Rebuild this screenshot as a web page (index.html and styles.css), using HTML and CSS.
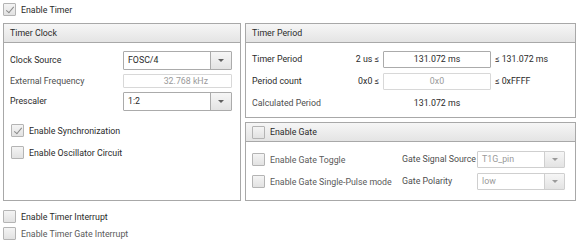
FILE: index.html
```html
<!DOCTYPE html>
<html lang="en">
<head>
  <meta charset="UTF-8">
  <title>Timer</title>
  <link rel="stylesheet" href="styles.css">
</head>
<body>
  <div class="timer-page">
    <!-- 상단 체크박스 -->
    <label class="check top-check">
      <span class="box checked"></span>
      <span class="check-text">Enable Timer</span>
    </label>

    <div class="panels">
      <!-- Timer Clock -->
      <div class="panel clock-panel">
        <div class="panel-head">Timer Clock</div>
        <div class="panel-body">
          <div class="field-row">
            <span class="label">Clock Source</span>
            <div class="combo">
              <span class="combo-value">FOSC/4</span>
              <span class="combo-button"><span class="arrow"></span></span>
            </div>
          </div>
          <div class="field-row">
            <span class="label muted">External Frequency</span>
            <div class="textbox readonly short">32.768 kHz</div>
          </div>
          <div class="field-row">
            <span class="label">Prescaler</span>
            <div class="combo">
              <span class="combo-value">1:2</span>
              <span class="combo-button"><span class="arrow"></span></span>
            </div>
          </div>
          <div class="clock-checks">
            <label class="check">
              <span class="box checked"></span>
              <span class="check-text">Enable Synchronization</span>
            </label>
            <label class="check">
              <span class="box"></span>
              <span class="check-text">Enable Oscillator Circuit</span>
            </label>
          </div>
        </div>
      </div>

      <div class="right-column">
        <!-- Timer Period -->
        <div class="panel period-panel">
          <div class="panel-head">Timer Period</div>
          <div class="panel-body period-grid">
            <span class="label">Timer Period</span>
            <span class="bound">2 us ≤</span>
            <div class="textbox">131.072 ms</div>
            <span class="bound-after">≤ 131.072 ms</span>

            <span class="label">Period count</span>
            <span class="bound">0x0 ≤</span>
            <div class="textbox readonly">0x0</div>
            <span class="bound-after">≤ 0xFFFF</span>

            <span class="label muted">Calculated Period</span>
            <span></span>
            <span class="calc-value">131.072 ms</span>
            <span></span>
          </div>
        </div>

        <!-- Enable Gate -->
        <div class="panel gate-panel">
          <div class="panel-head">
            <label class="check">
              <span class="box"></span>
              <span class="check-text">Enable Gate</span>
            </label>
          </div>
          <div class="panel-body gate-grid">
            <label class="check disabled">
              <span class="box"></span>
              <span class="check-text">Enable Gate Toggle</span>
            </label>
            <span class="label muted">Gate Signal Source</span>
            <div class="combo disabled">
              <span class="combo-value">T1G_pin</span>
              <span class="combo-button"><span class="arrow"></span></span>
            </div>

            <label class="check disabled">
              <span class="box"></span>
              <span class="check-text">Enable Gate Single-Pulse mode</span>
            </label>
            <span class="label muted">Gate Polarity</span>
            <div class="combo disabled">
              <span class="combo-value">low</span>
              <span class="combo-button"><span class="arrow"></span></span>
            </div>
          </div>
        </div>
      </div>
    </div>

    <!-- 하단 체크박스 -->
    <div class="bottom-checks">
      <label class="check">
        <span class="box"></span>
        <span class="check-text">Enable Timer Interrupt</span>
      </label>
      <label class="check disabled">
        <span class="box"></span>
        <span class="check-text">Enable Timer Gate Interrupt</span>
      </label>
    </div>
  </div>
</body>
</html>
```

FILE: styles.css
```css
/* 기본 */
* {
  box-sizing: border-box;
}
body {
  margin: 0;
  padding: 0;
  background-color: #FFFFFF;
  font-family: Roboto, "Open Sans", sans-serif;
  font-size: 8.8px;
  line-height: 13px;
  color: #2a2a2a;
}
.timer-page {
  padding: 3px 4px 0 3px;
}

/* 체크박스 */
.check {
  display: flex;
  align-items: center;
  height: 13px;
}
.box {
  position: relative;
  width: 13px;
  height: 13px;
  border: 1px solid #b4b4b4;
  border-radius: 1px;
  background: linear-gradient(#f4f4f4, #e2e2e2);
  flex-shrink: 0;
}
.box.checked::after {
  content: "";
  position: absolute;
  left: 4px;
  top: 1px;
  width: 3px;
  height: 7px;
  border-right: 1.3px solid #8a8a8a;
  border-bottom: 1.3px solid #8a8a8a;
  transform: rotate(40deg);
}
.check-text {
  margin-left: 5px;
  padding-top: 1px;
  white-space: nowrap;
}
.check.disabled .check-text {
  color: #5a5a5a;
}
.top-check {
  margin-bottom: 7px;
}

/* 패널 */
.panels {
  display: flex;
  gap: 4px;
}
.panel {
  border: 1px solid #a8a8a8;
  background-color: #FFFFFF;
}
.panel-head {
  height: 19px;
  padding-left: 6px;
  display: flex;
  align-items: center;
  border-bottom: 1px solid #a8a8a8;
  background: linear-gradient(#f6f6f6, #e4e4e4);
}
.clock-panel {
  width: 238px;
  height: 178px;
}
.right-column {
  width: 331px;
  display: flex;
  flex-direction: column;
  gap: 4px;
}
.period-panel {
  height: 95px;
}
.gate-panel {
  height: 79px;
}
.label {
  white-space: nowrap;
}
.muted {
  color: #4e4e4e;
}

/* Timer Clock */
.clock-panel .panel-body {
  padding: 8px 8px 0 6px;
}
.field-row {
  display: flex;
  align-items: center;
  justify-content: space-between;
  margin-bottom: 4px;
}
.combo {
  width: 109px;
  height: 19px;
  display: flex;
  border: 1px solid #ababab;
  border-radius: 1px;
  background-color: #FFFFFF;
}
.combo-value {
  flex: 1;
  padding-left: 4px;
  display: flex;
  align-items: center;
}
.combo-button {
  width: 21px;
  border-left: 1px solid #ababab;
  background: linear-gradient(#f6f6f6, #e3e3e3);
  display: flex;
  align-items: center;
  justify-content: center;
}
.arrow {
  width: 0;
  height: 0;
  border-left: 3px solid transparent;
  border-right: 3px solid transparent;
  border-top: 3px solid #606060;
}
.combo.disabled {
  width: 88px;
  height: 17px;
  border-color: #cfcfcf;
}
.combo.disabled .combo-value {
  color: #9a9a9a;
}
.combo.disabled .combo-button {
  width: 20px;
  border-left-color: #cfcfcf;
}
.combo.disabled .arrow {
  border-top-color: #9a9a9a;
}
.textbox {
  width: 108px;
  height: 17px;
  border: 1px solid #ababab;
  border-radius: 1px;
  display: flex;
  align-items: center;
  justify-content: center;
}
.textbox.readonly {
  border-color: #d8d8d8;
  color: #9a9a9a;
}
.textbox.short {
  width: 109px;
  height: 14px;
  justify-content: flex-end;
  padding-right: 23px;
}
.clock-checks {
  margin-top: 13px;
  display: flex;
  flex-direction: column;
  gap: 9px;
}
.clock-checks .check {
  margin-left: 1px;
}

/* Timer Period */
.period-grid {
  display: grid;
  grid-template-columns: 86px 37px 108px auto;
  column-gap: 4px;
  row-gap: 5px;
  align-items: center;
  padding: 8px 0 0 6px;
}
.bound {
  text-align: right;
  white-space: nowrap;
}
.bound-after {
  white-space: nowrap;
}
.calc-value {
  text-align: center;
  height: 16px;
  line-height: 16px;
}

/* Enable Gate */
.gate-panel .panel-head .check-text {
  margin-left: 5px;
}
.gate-grid {
  display: grid;
  grid-template-columns: 150px 75px 88px;
  row-gap: 5px;
  align-items: center;
  padding: 9px 0 0 6px;
}

/* 하단 */
.bottom-checks {
  margin-top: 9px;
  display: flex;
  flex-direction: column;
  gap: 4px;
}
```
